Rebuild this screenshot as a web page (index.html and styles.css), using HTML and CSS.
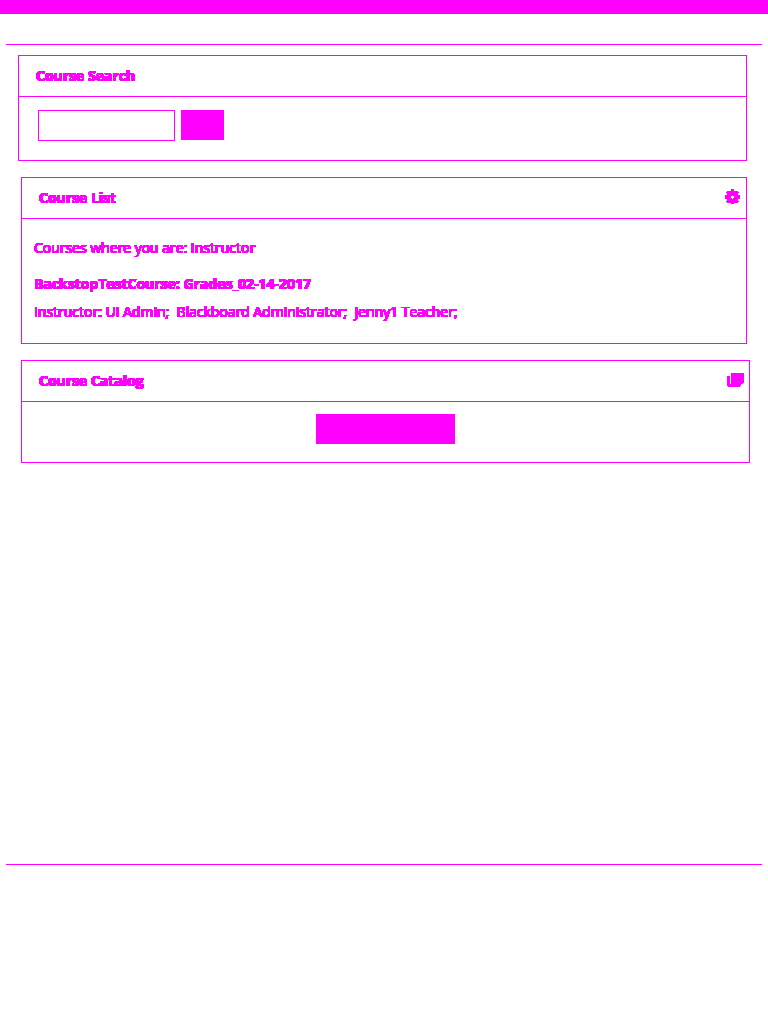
FILE: index.html
```html
<!DOCTYPE html>
<html lang="en">
<head>
<meta charset="utf-8">
<title>Courses</title>
<link rel="stylesheet" href="styles.css">
</head>
<body>
<svg class="defs" width="0" height="0" aria-hidden="true">
  <filter id="solid" x="-5%" y="-20%" width="110%" height="140%" color-interpolation-filters="sRGB">
    <feComponentTransfer><feFuncA type="linear" slope="255" intercept="-2"/></feComponentTransfer>
  </filter>
</svg>
<header class="topbar"></header>
<main class="content">
  <section class="panel search">
    <div class="panel-head"><h2 class="title">Course Search</h2></div>
    <form class="search-form">
      <input class="field" type="text" aria-label="Course Search">
      <button class="go" type="button"></button>
    </form>
  </section>
  <section class="panel list">
    <div class="panel-head">
      <h2 class="title">Course List</h2>
      <svg class="gear" width="15" height="15" viewBox="0 0 15 15" shape-rendering="crispEdges"><path fill-rule="evenodd" d="M6 0h3v2h4v1h1v1h-1v2h2v4h-2v2h1v1h-1v1H9v1H6v-1H2v-1H1v-1h1v-2H0V6h2V4H1V3h1V2h4zM6 7v2h1v1h1V9h1V7z"/></svg>
    </div>
    <div class="list-body">
      <p class="text role"><span>Courses where you are: Instructor</span></p>
      <p class="text course"><span>BackstopTestCourse: Grades_02-14-2017</span></p>
      <p class="text people"><span>Instructor: UI Admin;&nbsp; Blackboard Administrator;&nbsp; Jenny1 Teacher;</span></p>
    </div>
  </section>
  <section class="panel catalog">
    <div class="panel-head">
      <h2 class="title">Course Catalog</h2>
      <svg class="pages" width="17" height="14" viewBox="0 0 17 14" shape-rendering="crispEdges"><path d="M0 3h3v8h1V0h13v10h-1v1h-2v2h-1v1H1v-1H0z"/></svg>
    </div>
    <div class="catalog-body"><button class="browse" type="button"></button></div>
  </section>
</main>
</body>
</html>
```
FILE: styles.css
```css
* { box-sizing: border-box; }
body {
  margin: 0;
  background: #fff;
  color: #f0f;
  font: 14px/20px "Open Sans", "Noto Sans", sans-serif;
}
.defs { display: block; }
svg { fill: #f0f; }
.topbar { height: 14px; background: #f0f; }
.content {
  height: 821px;
  margin: 30px 6px 0;
  border-top: 1px solid #f0f;
  border-bottom: 1px solid #f0f;
  padding-top: 10px;
}
.panel { border: 1px solid #f0f; }
.search { width: 729px; height: 106px; margin-left: 12px; }
.list { width: 726px; height: 167px; margin: 16px 0 0 15px; }
.catalog { width: 729px; height: 103px; margin: 16px 0 0 15px; }
.panel-head {
  display: flex;
  justify-content: space-between;
  height: 41px;
  padding: 10px 5px 0 17px;
  border-bottom: 1px solid #f0f;
}
.title {
  margin: 0;
  font-size: 14px;
  line-height: 20px;
  font-weight: 700;
  letter-spacing: -0.01px;
  text-shadow: 0.3px 0 #f0f, -0.3px 0 #f0f;
  filter: url(#solid);
}
.gear { margin: 1px 1px 0 0; }
.pages { margin-top: 2px; }
.search-form {
  display: flex;
  gap: 6px;
  padding: 13px 0 0 19px;
}
.field { width: 137px; height: 31px; border: 1px solid #f0f; background: #fff; padding: 0 5px; }
.go { width: 43px; height: 30px; border: 0; background: #f0f; padding: 0; }
.list-body { padding: 19px 12px 0; }
.text { margin: 0; letter-spacing: -0.015px; }
.text span {
  display: inline-block;
  text-shadow: 0.3px 0 #f0f, -0.3px 0 #f0f;
  filter: url(#solid);
}
.role { margin-bottom: 16px; }
.course { font-weight: 700; margin-bottom: 8px; }
.catalog-body { display: flex; justify-content: center; padding-top: 12px; }
.browse { width: 139px; height: 30px; border: 0; background: #f0f; }
```
